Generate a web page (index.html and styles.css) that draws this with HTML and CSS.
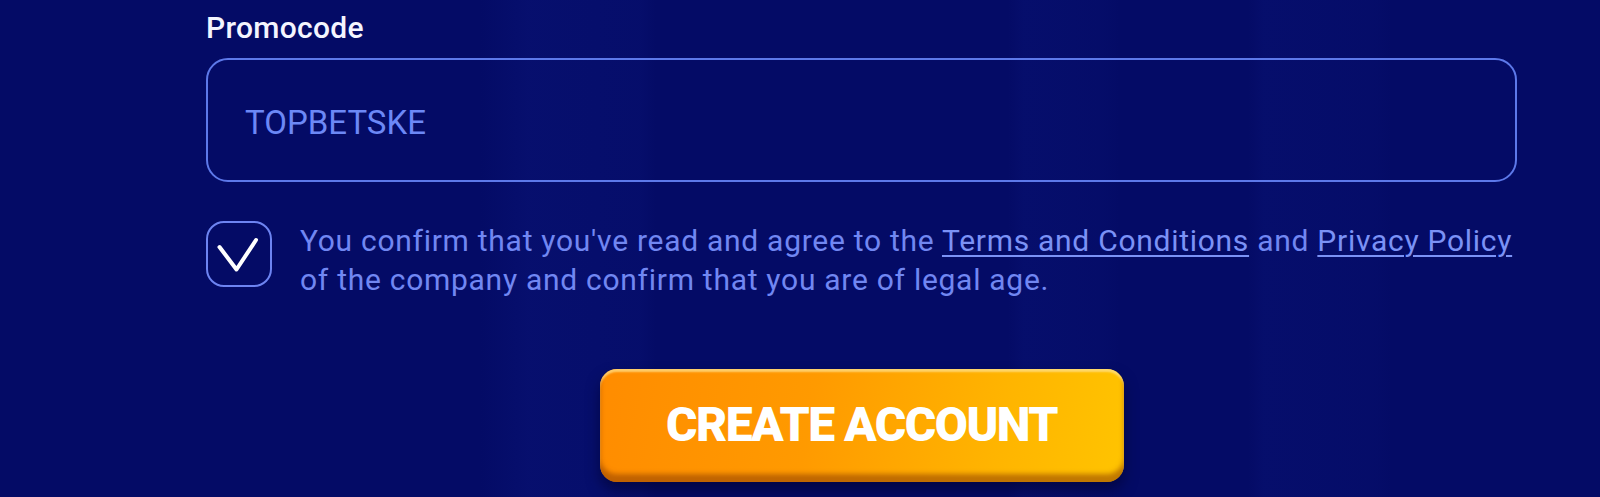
FILE: index.html
```html
<!DOCTYPE html>
<html lang="en">
<head>
<meta charset="utf-8">
<title>Promocode</title>
<link rel="stylesheet" href="styles.css">
</head>
<body>
<div class="page">
  <form class="form">
    <label class="label" for="promo">Promocode</label>
    <div class="field">
      <input class="input" id="promo" type="text" value="TOPBETSKE">
    </div>
    <div class="agree">
      <span class="check">
        <svg viewBox="0 0 66 66" width="66" height="66" aria-hidden="true">
          <path d="M13.5 26 L30.5 48.5 L50 19" fill="none" stroke="#ffffff" stroke-width="4" stroke-linecap="round" stroke-linejoin="round"/>
        </svg>
      </span>
      <p class="agree-text">You confirm that you've read and agree to the <a href="#">Terms and Conditions</a> and <a href="#">Privacy Policy</a> of the company and confirm that you are of legal age.</p>
    </div>
    <div class="actions">
      <button class="btn" type="button">CREATE ACCOUNT</button>
    </div>
  </form>
</div>
</body>
</html>
```

FILE: styles.css
```css
html, body {
  margin: 0;
  padding: 0;
  height: 100%;
}

body {
  background-color: #040b66;
  background-image:
    linear-gradient(90deg,
      rgba(0,0,0,0) 30%,
      rgba(20,35,150,0.16) 33%,
      rgba(20,35,150,0.10) 40%,
      rgba(0,0,0,0) 41%,
      rgba(0,0,0,0) 63%,
      rgba(20,35,150,0.12) 64%,
      rgba(20,35,150,0.06) 69%,
      rgba(0,0,0,0) 70%,
      rgba(0,0,0,0) 78%,
      rgba(20,35,150,0.12) 79%,
      rgba(20,35,150,0.06) 86%,
      rgba(0,0,0,0) 87%);
  font-family: Roboto, "Noto Sans", Arial, sans-serif;
  overflow: hidden;
}

.page {
  width: 1600px;
  height: 497px;
}

.form {
  width: 1311px;
  margin-left: 206px;
  padding-top: 10px;
  display: flex;
  flex-direction: column;
}

.label {
  display: block;
  color: #f4f5ff;
  font-size: 30px;
  line-height: 36px;
  font-weight: 500;
  letter-spacing: 0.3px;
  height: 36px;
}

.field {
  margin-top: 12px;
  height: 124px;
  box-sizing: border-box;
  border: 2px solid #5d79ea;
  border-radius: 22px;
  display: flex;
  align-items: center;
  padding: 4px 36px 0 37px;
}

.input {
  width: 100%;
  border: 0;
  outline: none;
  background: transparent;
  color: #6c88f6;
  font-family: Roboto, "Noto Sans", Arial, sans-serif;
  font-size: 33px;
  padding: 0;
  margin: 0;
}

.agree {
  margin-top: 39px;
  display: flex;
  align-items: flex-start;
  gap: 28px;
}

.check {
  flex: 0 0 auto;
  width: 66px;
  height: 66px;
  box-sizing: border-box;
  border: 2.5px solid #6d84f2;
  border-radius: 18px;
  position: relative;
}

.check svg {
  position: absolute;
  left: -2.5px;
  top: -2.5px;
}

.agree-text {
  flex: 1 1 auto;
  margin: 0;
  color: #7187f2;
  font-size: 30px;
  line-height: 39px;
  letter-spacing: 0.72px;
}

.agree-text a {
  color: #7b92f6;
  text-decoration: underline;
  text-underline-offset: 4px;
  text-decoration-thickness: 2px;
}

.actions {
  margin-top: 70px;
  display: flex;
  justify-content: center;
}

.btn {
  width: 524px;
  height: 113px;
  border: 0;
  border-radius: 17px;
  background: linear-gradient(100deg, #ff8c00 0%, #ff9a00 40%, #ffb400 75%, #ffc400 100%);
  box-shadow:
    inset 0 -8px 5px rgba(140, 60, 0, 0.55),
    inset 0 3px 2px rgba(255, 225, 140, 0.75),
    0 8px 14px rgba(0, 2, 40, 0.55);
  color: #ffffff;
  font-family: Roboto, "Noto Sans", Arial, sans-serif;
  font-weight: 900;
  font-size: 48px;
  letter-spacing: -1.5px;
  padding: 0 0 2px 0;
  cursor: pointer;
}
```
